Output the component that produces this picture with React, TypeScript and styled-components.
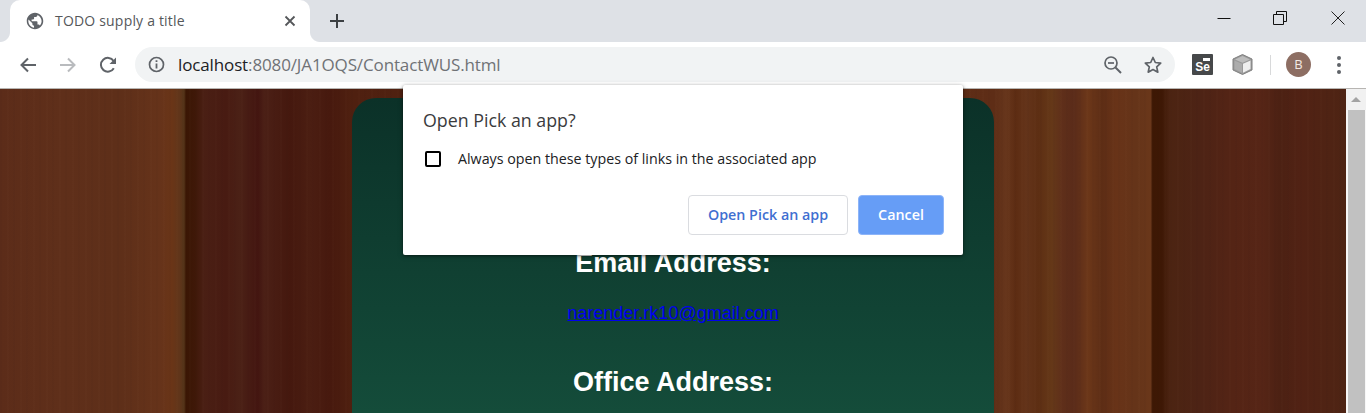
import React from 'react';
import styled, { createGlobalStyle } from 'styled-components';

const GlobalStyle = createGlobalStyle`
  html, body {
    margin: 0;
    padding: 0;
    height: 413px;
    overflow: hidden;
    background: #fff;
  }
  * { box-sizing: border-box; }
`;

const uiFont = `"Open Sans", "Noto Sans", sans-serif`;

const Window = styled.div`
  position: relative;
  width: 1366px;
  height: 413px;
  display: flex;
  flex-direction: column;
  overflow: hidden;
`;

const TabStrip = styled.div`
  height: 42px;
  flex: none;
  display: flex;
  align-items: stretch;
  padding-left: 10px;
  background: #dee1e6;
`;

const Tab = styled.div`
  position: relative;
  width: 300px;
  display: flex;
  align-items: center;
  padding: 0 14px 0 16px;
  background: #fff;
  border-radius: 10px 10px 0 0;
  &::before, &::after {
    content: '';
    position: absolute;
    bottom: 0;
    width: 10px;
    height: 10px;
  }
  &::before {
    left: -10px;
    background: radial-gradient(circle at 0 0, #dee1e6 9.5px, #fff 10.5px);
  }
  &::after {
    right: -10px;
    background: radial-gradient(circle at 100% 0, #dee1e6 9.5px, #fff 10.5px);
  }
`;

const TabTitle = styled.span`
  flex: 1;
  margin-left: 11px;
  font: 400 14px/20px ${uiFont};
  color: #55575a;
  letter-spacing: 0.19px;
`;

const NewTab = styled.div`
  width: 34px;
  margin-left: 10px;
  display: flex;
  align-items: center;
  justify-content: center;
`;

const WindowControls = styled.div`
  margin-left: auto;
  display: flex;
`;

const WindowButton = styled.div<{ $width: number }>`
  width: ${p => p.$width}px;
  height: 36px;
  display: flex;
  align-items: center;
  justify-content: center;
`;

const Toolbar = styled.div`
  height: 47px;
  flex: none;
  display: flex;
  align-items: center;
  padding: 0 7px 1px 8px;
  background: #fff;
  border-bottom: 1px solid #b7b5b2;
`;

const NavButton = styled.div`
  width: 40px;
  height: 34px;
  flex: none;
  display: flex;
  align-items: center;
  justify-content: center;
`;

const Omnibox = styled.div`
  width: 1040px;
  height: 35px;
  flex: none;
  margin-left: 7px;
  display: flex;
  align-items: center;
  padding: 0 12px 0 13px;
  border-radius: 18px;
  background: #f1f3f4;
`;

const Url = styled.div`
  flex: 1;
  margin-left: 13px;
  font: 400 17px/24px ${uiFont};
  letter-spacing: -0.13px;
  color: #6f7276;
  b {
    font-weight: 400;
    color: #202124;
  }
`;

const OmniIcon = styled.div<{ $gap?: number }>`
  width: 20px;
  height: 20px;
  display: flex;
  margin-left: ${p => p.$gap ?? 0}px;
`;

const Extension = styled.div<{ $gap: number }>`
  width: 21px;
  height: 21px;
  flex: none;
  margin-left: ${p => p.$gap}px;
`;

const SeleniumBadge = styled(Extension)`
  position: relative;
  display: flex;
  align-items: flex-end;
  justify-content: center;
  border-radius: 1px;
  background: #46484a;
  color: #fff;
  font: 700 12px/15px "Liberation Sans", sans-serif;
  &::after {
    content: '';
    position: absolute;
    top: 4px;
    right: 3px;
    width: 7px;
    height: 3px;
    background: #fff;
  }
`;

const Divider = styled.div`
  width: 1px;
  height: 20px;
  flex: none;
  margin-left: 17px;
  background: #d8d9da;
`;

const Avatar = styled.div`
  width: 25px;
  height: 25px;
  flex: none;
  margin-left: 15px;
  display: flex;
  align-items: center;
  justify-content: center;
  border-radius: 50%;
  background: #8d6e63;
  color: #f3e9e4;
  font: 400 13px/25px ${uiFont};
`;

const Kebab = styled.div`
  width: 4px;
  height: 18px;
  flex: none;
  margin-left: 26px;
  display: flex;
  flex-direction: column;
  justify-content: space-between;
  span {
    width: 4px;
    height: 4px;
    border-radius: 50%;
    background: #5f6368;
  }
`;

// wood planks: [x, colour] stops measured off the page background
const grain: [number, string][] = [
  [0, '#5c2c19'], [60, '#5f2f1a'], [120, '#5e2f19'], [160, '#66331a'], [172, '#6a3517'], [180, '#5f351a'], [184, '#553519'],
  [186, '#3a1604'], [195, '#3f1808'], [204, '#4a1f14'], [226, '#481b12'], [240, '#4b2116'], [258, '#431510'],
  [264, '#4b2016'], [290, '#45180e'], [310, '#4b1e12'], [330, '#47190e'], [352, '#4f2010'],
  [994, '#5e2d16'], [1006, '#67361c'], [1016, '#5d2c12'], [1026, '#64341a'], [1038, '#5d2e13'], [1052, '#653818'],
  [1062, '#5f2f1a'], [1074, '#5a2b19'], [1088, '#6c3719'], [1102, '#5d2d15'], [1116, '#683318'], [1136, '#653419'],
  [1151, '#6a371a'], [1152, '#3d1804'], [1162, '#3e1805'], [1170, '#4c2412'], [1200, '#4d2315'], [1232, '#542415'],
  [1262, '#562516'], [1280, '#4c2113'], [1300, '#512214'], [1346, '#4e2414'],
];

const woodBackground = `linear-gradient(90deg, ${grain
  .map(([x, colour]) => `${colour} ${x}px`)
  .join(', ')})`;

const Viewport = styled.div`
  flex: 1;
  min-height: 0;
  display: flex;
`;

const Page = styled.main`
  flex: 1;
  display: flex;
  justify-content: center;
  padding-top: 9px;
  background:
    repeating-linear-gradient(90deg, rgba(0, 0, 0, 0.02) 0 2px, transparent 2px 7px, rgba(255, 210, 170, 0.012) 7px 9px, transparent 9px 13px),
    ${woodBackground};
`;

const ContactPanel = styled.section`
  width: 642px;
  height: 520px;
  flex: none;
  padding-top: 149px;
  border-radius: 24px 24px 0 0;
  background: linear-gradient(180deg, #0b3128 0, #144c3a 315px);
  text-align: center;
  font-family: "Liberation Sans", Arial, sans-serif;
`;

const SectionTitle = styled.h2`
  margin: 0;
  font-size: 27px;
  line-height: 32px;
  font-weight: 700;
  color: #fff;
`;

const MailLink = styled.a`
  display: block;
  margin: 24px 0 42px;
  font-size: 18px;
  line-height: 21px;
  color: #0000ee;
  text-decoration: underline;
`;

const Scrollbar = styled.div`
  width: 20px;
  flex: none;
  display: flex;
  flex-direction: column;
  align-items: center;
  background: #f7f7f7;
`;

const ScrollUp = styled.div`
  height: 21px;
  flex: none;
  width: 100%;
  display: flex;
  align-items: center;
  justify-content: center;
  background: #f1f1f1;
  &::before {
    content: '';
    border-left: 5px solid transparent;
    border-right: 5px solid transparent;
    border-bottom: 5px solid #a3a3a3;
  }
`;

const ScrollThumb = styled.div`
  flex: 1;
  width: 17px;
  background: #c1c1c1;
`;

const Dialog = styled.div`
  position: absolute;
  top: 85px;
  left: 403px;
  width: 560px;
  height: 170px;
  padding: 23px 19px 20px 20px;
  display: flex;
  flex-direction: column;
  border-radius: 2px;
  background: #fff;
  box-shadow: 0 1px 3px rgba(0, 0, 0, 0.45), 0 1px 6px rgba(0, 0, 0, 0.2);
  font-family: ${uiFont};
`;

const DialogTitle = styled.div`
  font-size: 17.8px;
  line-height: 24px;
  color: #3a3b3d;
`;

const CheckRow = styled.label`
  margin-top: 17px;
  display: flex;
  align-items: center;
  font-size: 14.25px;
  line-height: 20px;
  color: #202124;
`;

const CheckBox = styled.span`
  width: 16px;
  height: 16px;
  flex: none;
  margin: 0 17px 0 2px;
  border: 2px solid #000;
  border-radius: 2px;
  background: #fff;
`;

const DialogActions = styled.div`
  margin-top: auto;
  display: flex;
  justify-content: flex-end;
  gap: 10px;
`;

const DialogButton = styled.button<{ $primary?: boolean }>`
  height: 40px;
  padding: 0;
  width: ${p => (p.$primary ? 86 : 160)}px;
  border-radius: 4px;
  border: 1px solid ${p => (p.$primary ? '#8db4f8' : '#dadce0')};
  background: ${p => (p.$primary ? '#669df6' : '#fff')};
  color: ${p => (p.$primary ? '#fff' : '#3f6fd1')};
  font: 600 14.3px/20px ${uiFont};
`;

const App: React.FC = () => (
  <>
    <GlobalStyle />
    <Window>
      <TabStrip>
        <Tab>
          <svg width="18" height="18" viewBox="0 0 24 24">
            <path
              fill="#5f6368"
              d="M12 1C5.900 1 1 5.900 1 12s4.900 11 11 11 11-4.900 11-11S18.100 1 12 1zm-1 19.900C6.500 20.400 3.100 16.600 3.100 12c0-.7.1-1.300.2-2L8.500 15v1.100c0 1.200 1 2.200 2.200 2.200v2.600zm7.500-2.800c-.3-.9-1.100-1.500-2.100-1.500h-1.100v-3.300c0-.6-.5-1.100-1.100-1.100H7.500V9.900h2.200c.6 0 1.100-.5 1.100-1.100V6.600H13c1.200 0 2.200-1 2.200-2.200V3.900c3.300 1.300 5.600 4.500 5.600 8.200 0 2.300-.9 4.400-2.300 6z"
            />
          </svg>
          <TabTitle>TODO supply a title</TabTitle>
          <svg width="12" height="12" viewBox="0 0 12 12">
            <path d="M1.500 1.500l9 9M10.500 1.500l-9 9" stroke="#55575a" strokeWidth="1.800" />
          </svg>
        </Tab>
        <NewTab>
          <svg width="16" height="16" viewBox="0 0 16 16">
            <path d="M8 1v14M1 8h14" stroke="#3c4043" strokeWidth="2" />
          </svg>
        </NewTab>
        <WindowControls>
          <WindowButton $width={53}>
            <svg width="14" height="14" viewBox="0 0 14 14">
              <path d="M0.500 7.500h13" stroke="#111" strokeWidth="1" />
            </svg>
          </WindowButton>
          <WindowButton $width={59}>
            <svg width="14" height="14" viewBox="0 0 14 14" fill="none">
              <path d="M0.500 3.500h10v10h-10zM3.500 3.500v-3h10v10h-3" stroke="#111" strokeWidth="1" />
            </svg>
          </WindowButton>
          <WindowButton $width={57}>
            <svg width="14" height="14" viewBox="0 0 14 14">
              <path d="M0.500 0.500l13 13M13.500 0.500l-13 13" stroke="#222" strokeWidth="1" />
            </svg>
          </WindowButton>
        </WindowControls>
      </TabStrip>

      <Toolbar>
        <NavButton>
          <svg width="18" height="18" viewBox="0 0 18 18" fill="none">
            <path d="M17 9H2.500M9 2.500L2.500 9 9 15.500" stroke="#5f6368" strokeWidth="2" />
          </svg>
        </NavButton>
        <NavButton>
          <svg width="18" height="18" viewBox="0 0 18 18" fill="none">
            <path d="M1 9h14.500M9 2.500L15.500 9 9 15.500" stroke="#b9bbbe" strokeWidth="2" />
          </svg>
        </NavButton>
        <NavButton>
          <svg width="18" height="18" viewBox="0 0 18 18" fill="none">
            <path d="M14.800 12.200A6.900 6.900 0 1 1 14.600 5" stroke="#5f6368" strokeWidth="2" />
            <path d="M17 1.500V8h-6.500z" fill="#5f6368" />
          </svg>
        </NavButton>
        <Omnibox>
          <svg width="17" height="17" viewBox="0 0 17 17" fill="none">
            <circle cx="8.500" cy="8.500" r="7" stroke="#5f6368" strokeWidth="1.700" />
            <path d="M8.500 7.500v5M8.500 4.300v1.800" stroke="#5f6368" strokeWidth="1.800" />
          </svg>
          <Url>
            <b>localhost</b>:8080/JA1OQS/ContactWUS.html
          </Url>
          <OmniIcon>
            <svg width="20" height="20" viewBox="0 0 20 20" fill="none">
              <circle cx="8" cy="8" r="6" stroke="#5f6368" strokeWidth="1.700" />
              <path d="M5 8h6" stroke="#5f6368" strokeWidth="1.700" />
              <path d="M12.500 12.500l5.500 5.500" stroke="#5f6368" strokeWidth="2" />
            </svg>
          </OmniIcon>
          <OmniIcon $gap={20}>
            <svg width="20" height="20" viewBox="0 0 20 20" fill="none">
              <path
                d="M10 2.500l2.300 5 5.400.6-4 3.700 1.100 5.400L10 14.500l-4.800 2.700 1.100-5.400-4-3.700 5.400-.6z"
                stroke="#5f6368"
                strokeWidth="1.700"
                strokeLinejoin="round"
              />
            </svg>
          </OmniIcon>
        </Omnibox>
        <SeleniumBadge $gap={17}>Se</SeleniumBadge>
        <Extension $gap={19}>
          <svg width="21" height="21" viewBox="0 0 21 21">
            <path d="M10.500 0.500L20 5V16L10.500 20.500 1 16V5z" fill="#9a9a9a" stroke="#7f7f7f" />
            <path d="M10.500 2L18 5.500 10.500 8.800 3 5.500z" fill="#bdbdbd" />
            <path d="M11 9.800L18.500 6.500V15L11 18.800z" fill="#efefef" />
            <path d="M10 9.800L2.500 6.500V15L10 18.800z" fill="#acacac" />
          </svg>
        </Extension>
        <Divider />
        <Avatar>B</Avatar>
        <Kebab>
          <span />
          <span />
          <span />
        </Kebab>
      </Toolbar>

      <Viewport>
        <Page>
          <ContactPanel>
            <SectionTitle>Email Address:</SectionTitle>
            <MailLink href="#">narender.rk10@gmail.com</MailLink>
            <SectionTitle>Office Address:</SectionTitle>
          </ContactPanel>
        </Page>
        <Scrollbar>
          <ScrollUp />
          <ScrollThumb />
        </Scrollbar>
      </Viewport>

      <Dialog>
        <DialogTitle>Open Pick an app?</DialogTitle>
        <CheckRow>
          <CheckBox />
          Always open these types of links in the associated app
        </CheckRow>
        <DialogActions>
          <DialogButton>Open Pick an app</DialogButton>
          <DialogButton $primary>Cancel</DialogButton>
        </DialogActions>
      </Dialog>
    </Window>
  </>
);

export default App;
